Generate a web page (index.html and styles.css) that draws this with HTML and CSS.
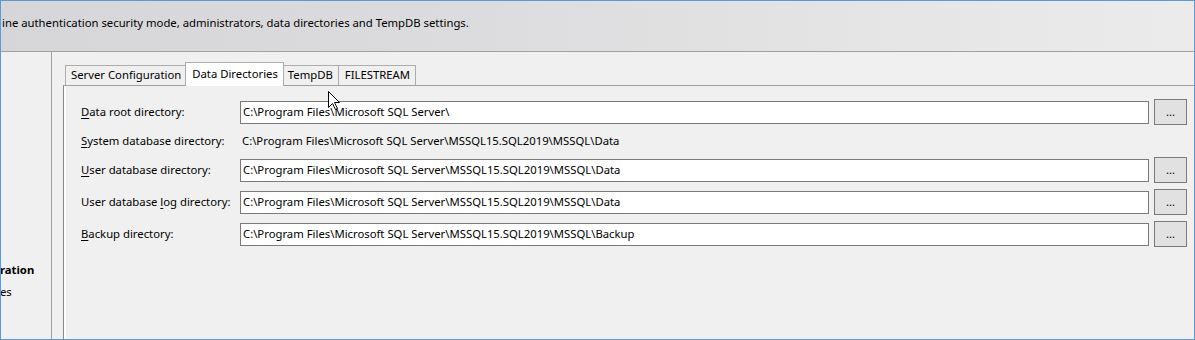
FILE: index.html
```html
<!DOCTYPE html>
<html>
<head>
<meta charset="utf-8">
<link rel="stylesheet" href="styles.css">
</head>
<body>
<div class="window">
  <div class="header">
    <span class="header-text">ine authentication security mode, administrators, data directories and TempDB settings.</span>
  </div>
  <div class="main">
    <div class="nav">
      <div class="nav-item nav-bold">ration</div>
      <div class="nav-item">es</div>
    </div>
    <div class="content">
      <div class="tabs">
        <div class="tab">Server Configuration</div>
        <div class="tab tab-active">Data Directories</div>
        <div class="tab">TempDB</div>
        <div class="tab">FILESTREAM</div>
      </div>
      <div class="panel">
        <div class="form">
          <div class="label"><u>D</u>ata root directory:</div>
          <div class="input">C:\Program Files\Microsoft SQL Server\</div>
          <div class="btn">...</div>

          <div class="label label-static"><u>S</u>ystem database directory:</div>
          <div class="value">C:\Program Files\Microsoft SQL Server\MSSQL15.SQL2019\MSSQL\Data</div>
          <div></div>

          <div class="label"><u>U</u>ser database directory:</div>
          <div class="input">C:\Program Files\Microsoft SQL Server\MSSQL15.SQL2019\MSSQL\Data</div>
          <div class="btn">...</div>

          <div class="label">User database <u>l</u>og directory:</div>
          <div class="input">C:\Program Files\Microsoft SQL Server\MSSQL15.SQL2019\MSSQL\Data</div>
          <div class="btn">...</div>

          <div class="label"><u>B</u>ackup directory:</div>
          <div class="input">C:\Program Files\Microsoft SQL Server\MSSQL15.SQL2019\MSSQL\Backup</div>
          <div class="btn">...</div>
        </div>
      </div>
    </div>
  </div>
  <svg class="cursor" width="13" height="20" viewBox="0 0 13 20">
    <path d="M0.5 0.5 L0.5 16.5 L4.5 12.5 L7.5 18.5 L9.5 17.5 L6.5 11.5 L11.5 11.5 Z" fill="#fff" stroke="#000" stroke-width="1"/>
  </svg>
</div>
</body>
</html>
```

FILE: styles.css
```css
* { box-sizing: border-box; }
html, body {
  margin: 0;
  padding: 0;
  width: 1195px;
  height: 340px;
  overflow: hidden;
  background: #f0f0f0;
}
body {
  font-family: "Noto Sans", "Open Sans", sans-serif;
  font-size: 11.3px;
  color: #000;
}
.window {
  position: relative;
  width: 1195px;
  height: 340px;
  border: 1px solid #5b9bd5;
  background: #f0f0f0;
  display: flex;
  flex-direction: column;
  overflow: hidden;
}
.header {
  height: 51px;
  flex: none;
  border-bottom: 1px solid #a0a0a0;
  background: linear-gradient(to right, #d6d6d9 0%, #dcdcde 40%, #e8e8e8 85%, #ebebeb 100%);
  display: flex;
  align-items: center;
  padding-left: 1px;
  padding-bottom: 6px;
  white-space: nowrap;
}
.header-text { line-height: 16px; }
.main {
  flex: 1;
  display: flex;
  min-height: 0;
}
.nav {
  width: 51px;
  flex: none;
  border-right: 1px solid #a0a0a0;
  overflow: hidden;
  padding-top: 209px;
  white-space: nowrap;
}
.nav-item {
  height: 22px;
  line-height: 18px;
  margin-left: -1px;
}
.nav-bold { font-weight: bold; }
.content {
  flex: 1;
  display: flex;
  flex-direction: column;
  padding-left: 11px;
  padding-top: 10px;
  min-width: 0;
}
.tabs {
  display: flex;
  align-items: flex-end;
  height: 23px;
  padding-left: 2px;
  flex: none;
}
.tab {
  height: 20px;
  padding: 0 5px;
  border: 1px solid #adadad;
  border-bottom: none;
  margin-left: -1px;
  background: #f0f0f0;
  line-height: 18px;
  white-space: nowrap;
}
.tab:first-child { margin-left: 0; padding: 0 4px 0 5px; }
.tab-active {
  position: relative;
  z-index: 1;
  height: 24px;
  margin-bottom: -1px;
  background: #fff;
  padding: 0 5px 0 6px;
  line-height: 22px;
  margin-left: -1px;
  margin-right: -1px;
}
.tab-active + .tab { margin-left: 0; padding: 0 5px 0 4px; }
.tab:last-child { padding: 0 5px 0 6px; }
.panel {
  flex: 1;
  border-top: 1px solid #a0a0a0;
  border-left: 1px solid #898989;
  box-shadow: inset 2px 0 0 #ffffff;
  padding: 13px 7px 0 17px;
}
.form {
  display: grid;
  grid-template-columns: 154px 1fr 33px;
  grid-template-rows: 26px 20px 26px 26px 26px;
  column-gap: 5px;
  row-gap: 6px;
  align-items: center;
}
.label { white-space: nowrap; line-height: 16px; }
.input {
  height: 23px;
  align-self: start;
  margin-top: 2px;
  background: #fff;
  border: 1px solid #7a7a7a;
  padding-left: 2px;
  line-height: 20px;
  white-space: nowrap;
  overflow: hidden;
}
.value {
  padding-left: 2px;
  line-height: 16px;
  white-space: nowrap;
}
.btn {
  height: 26px;
  background: #e1e1e1;
  border: 1px solid #7a7a7a;
  text-align: center;
  line-height: 24px;
}
.cursor {
  position: absolute;
  left: 327px;
  top: 90px;
}
u { text-decoration: underline; text-underline-offset: 2px; }
```
